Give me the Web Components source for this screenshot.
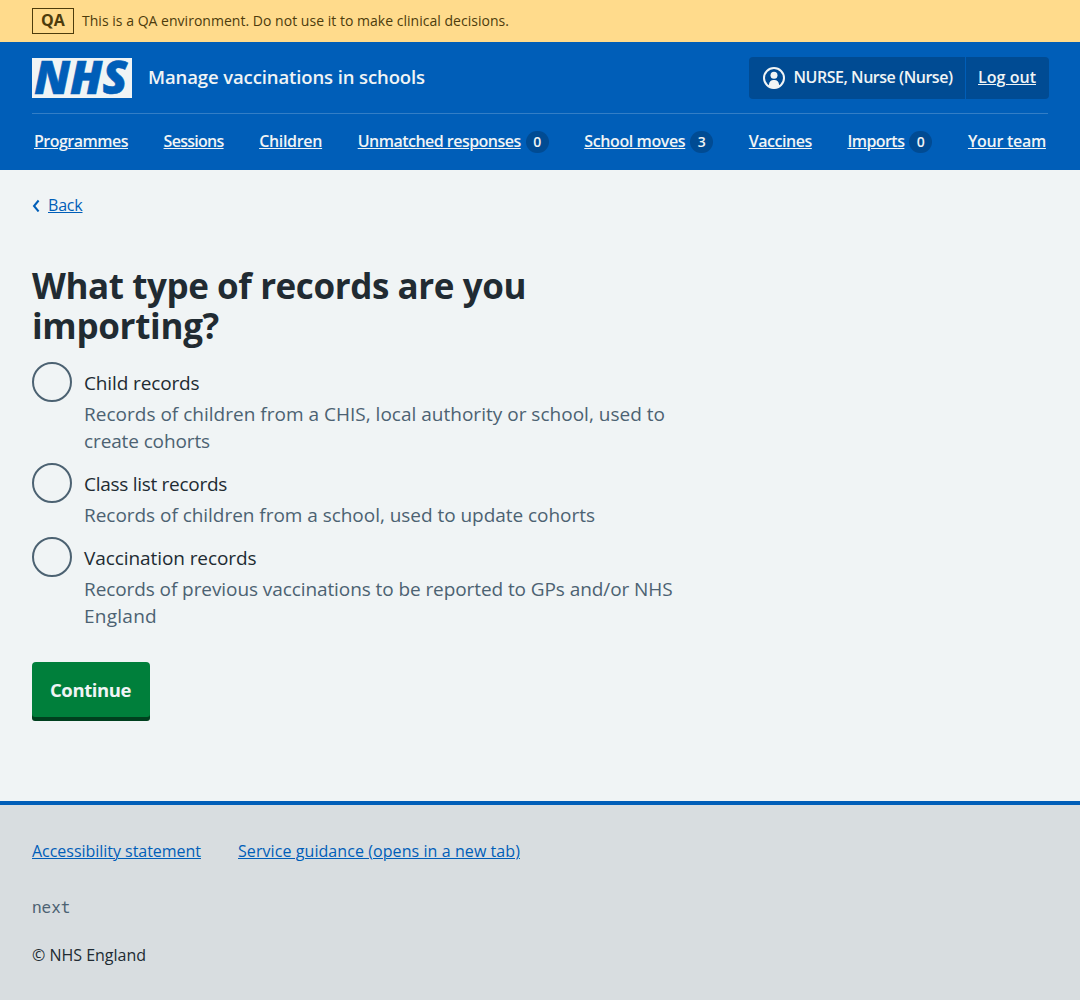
<!DOCTYPE html>
<html lang="en"><head><meta charset="utf-8"><title>What type of records are you importing?</title>
<style>
body{margin:0;background:#f0f4f5;color:#212b32;font-family:"Open Sans","Noto Sans",sans-serif;font-size:16px;line-height:24px}
</style></head><body>
<qa-banner tag="QA"><fit-text w="427">This is a QA environment. Do not use it to make clinical decisions.</fit-text></qa-banner>
<app-header>
  <fit-text slot="name" w="277">Manage vaccinations in schools</fit-text>
  <fit-text slot="user" w="159">NURSE, Nurse (Nurse)</fit-text>
  <fit-text slot="logout" w="58" link>Log out</fit-text>
  <nav-item w="94">Programmes</nav-item>
  <nav-item w="60">Sessions</nav-item>
  <nav-item w="63">Children</nav-item>
  <nav-item w="163" count="0">Unmatched responses</nav-item>
  <nav-item w="101" count="3">School moves</nav-item>
  <nav-item w="63">Vaccines</nav-item>
  <nav-item w="57" count="0">Imports</nav-item>
  <nav-item w="78">Your team</nav-item>
</app-header>
<app-main>
  <fit-text slot="title" w="494">What type of records are you</fit-text>
  <fit-text slot="title" w="187">importing?</fit-text>
  <radio-option>
    <fit-text slot="label" w="115.5">Child records</fit-text>
    <fit-text w="581">Records of children from a CHIS, local authority or school, used to</fit-text>
    <fit-text w="126">create cohorts</fit-text>
  </radio-option>
  <radio-option>
    <fit-text slot="label" w="143">Class list records</fit-text>
    <fit-text w="511">Records of children from a school, used to update cohorts</fit-text>
  </radio-option>
  <radio-option>
    <fit-text slot="label" w="172.5">Vaccination records</fit-text>
    <fit-text w="588.5">Records of previous vaccinations to be reported to GPs and/or NHS</fit-text>
    <fit-text w="73">England</fit-text>
  </radio-option>
</app-main>
<app-footer></app-footer>
<script>
// Inline text that spreads its letters to fill a given width.
class FitText extends HTMLElement{
  connectedCallback(){
    const r=this.attachShadow({mode:'open'});
    r.innerHTML='<style>:host{display:inline-block;white-space:nowrap}span{display:inline-block}:host([link]) span{text-decoration:underline;text-decoration-thickness:1px;text-underline-offset:1px}</style><span><slot></slot></span>';
    const w=parseFloat(this.getAttribute('w'));
    requestAnimationFrame(()=>{
      const s=r.querySelector('span'),n=this.textContent.length;
      s.style.letterSpacing=((w-s.getBoundingClientRect().width)/n)+'px';
      this.style.width=w+'px';
    });
  }
}
class QaBanner extends HTMLElement{
  connectedCallback(){
    this.attachShadow({mode:'open'}).innerHTML=`<style>
:host{display:flex;align-items:center;gap:8px;height:42px;padding:0 32px;box-sizing:border-box;background:#ffdb8c;color:#4d3c0c;font-size:14px}
b{box-sizing:border-box;width:42px;height:26px;border:1px solid #4d3c0c;font-size:16px;font-weight:700;line-height:23px;text-align:center}
</style><b>${this.getAttribute('tag')}</b><slot></slot>`;
  }
}
class NavItem extends HTMLElement{
  connectedCallback(){
    const c=this.getAttribute('count');
    this.attachShadow({mode:'open'}).innerHTML=`<style>
:host{display:flex;align-items:center;gap:5px;height:24px}
a{height:24px;line-height:22px;display:block}
i{font-style:normal;font-size:14px;font-weight:600;line-height:22px;width:23px;height:22px;border-radius:11px;background:#004b93;text-align:center}
</style><a><fit-text w="${this.getAttribute('w')}" link>${this.textContent}</fit-text></a>${c===null?'':`<i>${c}</i>`}`;
  }
}
class AppHeader extends HTMLElement{
  connectedCallback(){
    this.attachShadow({mode:'open'}).innerHTML=`<style>
:host{display:block;height:128px;padding:0 32px;box-sizing:border-box;background:#005eb8;color:#f0f4f5;font-weight:600}
.top{display:flex;align-items:center;height:71px}
.logo{display:block;width:100px;height:40px;margin-right:16px;overflow:visible}
.name{font-size:18.5px;font-weight:600;height:26px}
.acct{display:flex;margin-left:auto;margin-right:-1px;width:300px;height:42px;border-radius:4px;background:#004b93;line-height:41px;box-sizing:border-box}
.user{display:flex;align-items:center;width:217px;box-sizing:border-box;padding-left:14px;border-right:1px solid #005eb8}
.user svg{margin-right:8.5px;flex:none}
.out{padding-left:12px}
nav{display:flex;justify-content:space-between;align-items:center;height:56px;border-top:1px solid #337ec6;padding:0 2px}
</style>
<div class="top">
<svg class="logo" viewBox="0 0 100 40"><rect width="100" height="40" fill="#f0f4f5"/><text x="2.300" y="36.300" font-family="Open Sans" font-style="italic" font-weight="800" font-size="46" textLength="93" lengthAdjust="spacingAndGlyphs" fill="#005eb8" stroke="#005eb8" stroke-width=".6">NHS</text></svg>
<span class="name"><slot name="name"></slot></span>
<div class="acct"><div class="user"><svg width="22" height="22" viewBox="0 0 22 22"><defs><clipPath id="c"><circle cx="11" cy="11" r="10.5"/></clipPath></defs><circle cx="11" cy="11" r="10" fill="none" stroke="#f0f4f5" stroke-width="2"/><circle cx="11" cy="8.300" r="3.500" fill="#f0f4f5"/><path clip-path="url(#c)" d="M6 22v-4.500a4.500 4.500 0 0 1 4.500-4.500h1a4.500 4.500 0 0 1 4.500 4.500V22z" fill="#f0f4f5"/></svg><slot name="user"></slot></div><div class="out"><slot name="logout"></slot></div></div>
</div><nav><slot></slot></nav>`;
  }
}
class RadioOption extends HTMLElement{
  connectedCallback(){
    this.attachShadow({mode:'open'}).innerHTML=`<style>
:host{display:flex;gap:12px;font-size:19px;line-height:27px;height:92px}
:host(:nth-of-type(2)){height:65px}
.o{flex:none;box-sizing:border-box;width:40px;height:40px;border:2px solid #4c6272;border-radius:50%}
.l{height:31px;padding-top:8px}
.h{display:flex;flex-direction:column;align-items:flex-start;color:#4c6272}
</style><div class="o"></div><div><div class="l"><slot name="label"></slot></div><div class="h"><slot></slot></div></div>`;
  }
}
class AppMain extends HTMLElement{
  connectedCallback(){
    this.attachShadow({mode:'open'}).innerHTML=`<style>
:host{display:block;height:631px;padding:23px 32px 0;box-sizing:border-box}
.back{display:flex;align-items:center;gap:8px;color:#005eb8;height:24px}
h1{margin:49px 0 16px;font-size:35px;font-weight:700;line-height:40px;display:flex;flex-direction:column;align-items:flex-start}
.opts{display:flex;flex-direction:column;gap:9px}
button{display:block;margin:33px 0 0;padding:0 0 0 18px;width:117.5px;height:55px;border:0;border-radius:4px 4px 3px 3px;background:#007f3b;box-shadow:0 4px #00401e;color:#f0f4f5;font:700 18.5px/55px "Open Sans",sans-serif;text-align:left}
button fit-text{display:block;height:55px}
</style>
<div class="back"><svg width="8" height="14" viewBox="0 0 8 14"><path d="M6.600 2.500 2 8l4.600 5.500" fill="none" stroke="#005eb8" stroke-width="2"/></svg><span><fit-text w="34.5" link>Back</fit-text></span></div>
<h1><slot name="title"></slot></h1>
<div class="opts"><slot></slot></div>
<button><fit-text w="81">Continue</fit-text></button>`;
  }
}
class AppFooter extends HTMLElement{
  connectedCallback(){
    this.attachShadow({mode:'open'}).innerHTML=`<style>
:host{display:block;height:199px;padding:34px 32px 0;box-sizing:border-box;background:#d8dde0;border-top:4px solid #005eb8}
.links{display:flex;gap:37px;color:#005eb8;height:24px}
.v{margin-top:32px;height:24px;color:#4c6272;font-family:"Noto Sans Mono","DejaVu Sans Mono",monospace}
.c{margin-top:24px}
</style>
<div class="links"><span><fit-text w="169" link>Accessibility statement</fit-text></span><span><fit-text w="282" link>Service guidance (opens in a new tab)</fit-text></span></div>
<div class="v"><fit-text w="38.4">next</fit-text></div>
<div class="c"><fit-text w="114">© NHS England</fit-text></div>`;
  }
}
customElements.define('fit-text',FitText);
customElements.define('qa-banner',QaBanner);
customElements.define('nav-item',NavItem);
customElements.define('app-header',AppHeader);
customElements.define('radio-option',RadioOption);
customElements.define('app-main',AppMain);
customElements.define('app-footer',AppFooter);
</script></body></html>
